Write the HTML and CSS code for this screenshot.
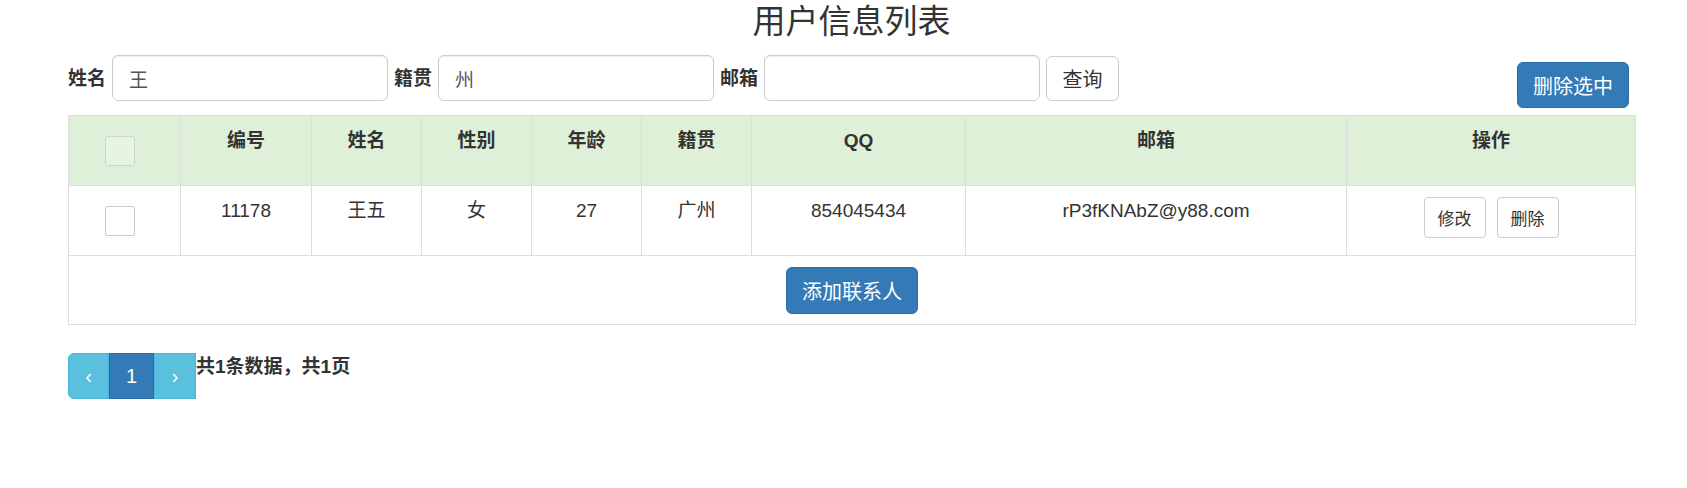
FILE: index.html
```html
<!DOCTYPE html>
<html lang="zh-CN">
<head>
<meta charset="utf-8">
<title>用户信息列表</title>
<link rel="stylesheet" href="styles.css">
</head>
<body>
<div class="page">
  <h1 class="title">用户信息列表</h1>
  <div class="toolbar">
    <form class="search">
      <label class="search-label">姓名</label>
      <input class="field" type="text" value="王">
      <label class="search-label">籍贯</label>
      <input class="field" type="text" value="州">
      <label class="search-label">邮箱</label>
      <input class="field" type="text" value="">
      <button type="button" class="btn btn-default btn-query">查询</button>
    </form>
    <button type="button" class="btn btn-primary btn-del">删除选中</button>
  </div>

  <table class="grid">
    <colgroup>
      <col class="c-check">
      <col class="c-id">
      <col class="c-name">
      <col class="c-sex">
      <col class="c-age">
      <col class="c-addr">
      <col class="c-qq">
      <col class="c-mail">
      <col class="c-ops">
    </colgroup>
    <thead>
      <tr class="head-row">
        <th class="cell-check"><input class="check check-head" type="checkbox"></th>
        <th>编号</th>
        <th>姓名</th>
        <th>性别</th>
        <th>年龄</th>
        <th>籍贯</th>
        <th>QQ</th>
        <th>邮箱</th>
        <th>操作</th>
      </tr>
    </thead>
    <tbody>
      <tr>
        <td class="cell-check"><input class="check" type="checkbox"></td>
        <td>11178</td>
        <td>王五</td>
        <td>女</td>
        <td>27</td>
        <td>广州</td>
        <td>854045434</td>
        <td>rP3fKNAbZ@y88.com</td>
        <td>
          <div class="ops">
            <button type="button" class="btn btn-default btn-sm">修改</button>
            <button type="button" class="btn btn-default btn-sm">删除</button>
          </div>
        </td>
      </tr>
      <tr>
        <td colspan="9" class="cell-add">
          <button type="button" class="btn btn-primary btn-add">添加联系人</button>
        </td>
      </tr>
    </tbody>
  </table>

  <div class="pager">
    <ul class="pagination">
      <li class="page-item page-prev">‹</li>
      <li class="page-item page-current">1</li>
      <li class="page-item page-next">›</li>
    </ul>
    <span class="pager-info">共1条数据，共1页</span>
  </div>
</div>
</body>
</html>
```

FILE: styles.css
```css
* {
  box-sizing: border-box;
}

html, body {
  margin: 0;
  padding: 0;
  background: #fff;
}

body {
  font-family: "Liberation Sans", "Noto Sans CJK SC", sans-serif;
  font-size: 19px;
  line-height: 27px;
  color: #333;
}

.page {
  margin: 0 52px 0 68px;
}

.title {
  margin: 3px 0 15px;
  font-size: 33px;
  line-height: 37px;
  font-weight: normal;
  text-align: center;
  color: #333;
}

.toolbar {
  display: flex;
  justify-content: space-between;
  align-items: flex-start;
}

.search {
  display: flex;
  align-items: center;
  gap: 6px;
  margin: 0;
}

.search-label {
  font-weight: bold;
  font-size: 19px;
}

.field {
  width: 276px;
  height: 46px;
  padding: 0 16px;
  border: 1px solid #ccc;
  border-radius: 6px;
  box-shadow: inset 0 1px 1px rgba(0, 0, 0, 0.075);
  font-family: inherit;
  font-size: 19px;
  color: #555;
  background: #fff;
  outline: none;
}

.btn {
  display: inline-flex;
  align-items: center;
  justify-content: center;
  font-family: inherit;
  font-size: 20px;
  border: 1px solid transparent;
  border-radius: 6px;
  padding: 0 15px;
  height: 46px;
  cursor: pointer;
  white-space: nowrap;
}

.btn-default {
  background: #fff;
  color: #333;
  border-color: #ccc;
}

.btn-primary {
  background: #337ab7;
  color: #fff;
  border-color: #2e6da4;
}

.btn-query {
  width: 73px;
  height: 45px;
  padding: 0;
}

.btn-del {
  width: 112px;
  margin-top: 7px;
  margin-right: 6px;
}

.btn-sm {
  width: 62px;
  height: 41px;
  padding: 0;
  font-size: 17px;
  border-radius: 4px;
}

.btn-add {
  width: 132px;
  height: 47px;
}

.grid {
  width: 100%;
  margin-top: 7px;
  border-collapse: collapse;
  table-layout: fixed;
  border: 1px solid #ddd;
}

.c-check { width: 112px; }
.c-id { width: 131px; }
.c-name { width: 110px; }
.c-sex { width: 110px; }
.c-age { width: 110px; }
.c-addr { width: 110px; }
.c-qq { width: 214px; }
.c-mail { width: 381px; }
.c-ops { width: 289px; }

.grid th,
.grid td {
  border: 1px solid #ddd;
  padding: 11px 8px 10px;
  text-align: center;
  vertical-align: top;
  line-height: 27px;
}

.grid th {
  font-weight: bold;
  font-size: 19px;
}

.head-row {
  background: #dff0d8;
}

.cell-check {
  font-size: 0;
  line-height: 0;
}

.check {
  -webkit-appearance: none;
  appearance: none;
  display: inline-block;
  width: 30px;
  height: 30px;
  margin: 9px 9px 9px 0;
  border: 1px solid #ccc;
  border-radius: 2px;
  background: #fff;
  vertical-align: top;
}

.check-head {
  border-color: #cfd6cc;
  background: rgba(255, 255, 255, 0.25);
}

.ops {
  display: flex;
  justify-content: center;
  gap: 11px;
}

.cell-add {
  padding: 11px 8px 10px;
}

.cell-add .btn-add {
  vertical-align: top;
}

.pager {
  display: flex;
  align-items: flex-start;
  margin-top: 28px;
}

.pagination {
  display: flex;
  list-style: none;
  margin: 0;
  padding: 0;
}

.page-item {
  height: 46px;
  display: flex;
  align-items: center;
  justify-content: center;
  font-size: 20px;
  color: #fff;
  border: 1px solid #46b8da;
  background: #5bc0de;
}

.page-prev {
  width: 41px;
  border-radius: 6px 0 0 6px;
}

.page-current {
  width: 45px;
  background: #337ab7;
  border-color: #2e6da4;
}

.page-next {
  width: 42px;
}

.pager-info {
  font-weight: bold;
  font-size: 19px;
  line-height: 27px;
}
```
